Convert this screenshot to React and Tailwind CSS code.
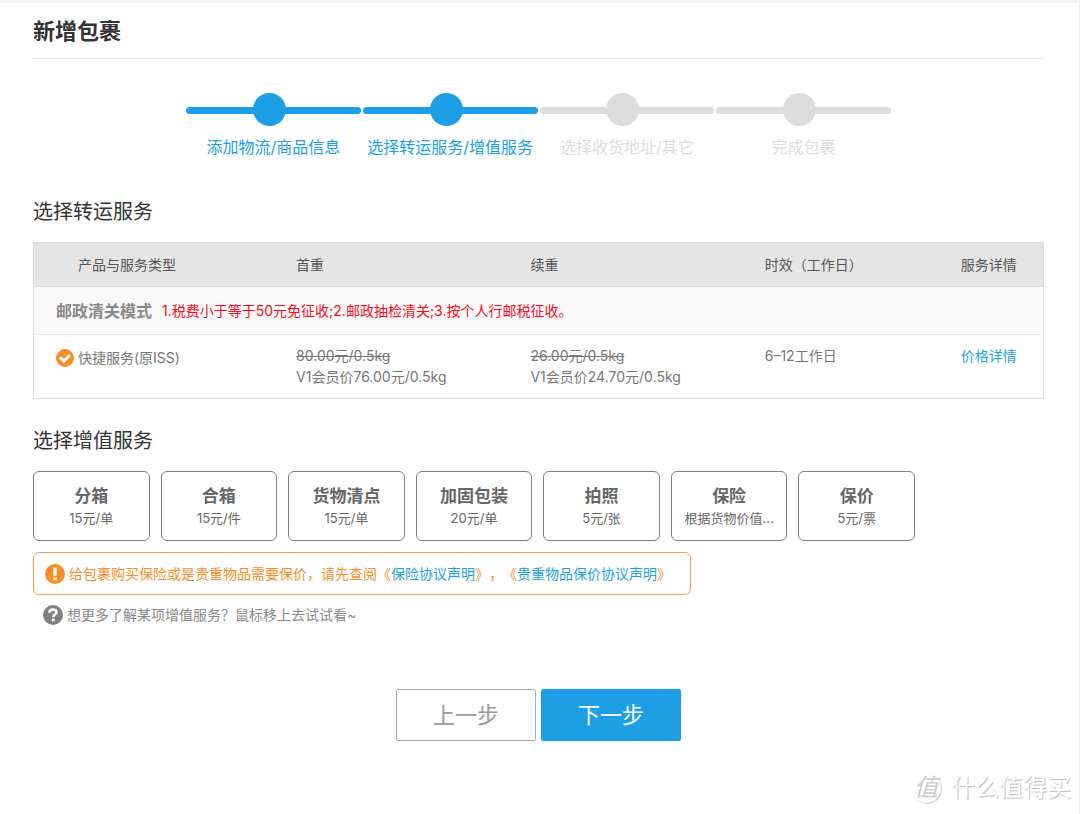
import React, { useState } from "react";

const steps = [
  { label: "添加物流/商品信息", done: true },
  { label: "选择转运服务/增值服务", done: true },
  { label: "选择收货地址/其它", done: false },
  { label: "完成包裹", done: false }
];

const shippingOptions = [
  {
    id: "iss",
    name: "快捷服务(原ISS)",
    first: { price: "80.00元/0.5kg", member: "V1会员价76.00元/0.5kg" },
    extra: { price: "26.00元/0.5kg", member: "V1会员价24.70元/0.5kg" },
    days: "6–12工作日"
  }
];

const extraServices = [
  { name: "分箱", price: "15元/单" },
  { name: "合箱", price: "15元/件" },
  { name: "货物清点", price: "15元/单" },
  { name: "加固包装", price: "20元/单" },
  { name: "拍照", price: "5元/张" },
  { name: "保险", price: "根据货物价值..." },
  { name: "保价", price: "5元/票" }
];

const Steps = () => (
  <ol className="mx-auto mt-[34px] flex max-w-[705px] gap-0.5">
    {steps.map((step) => (
      <li key={step.label} className="flex-1">
        <div className="grid items-center">
          <div className={`col-start-1 row-start-1 mt-0.5 h-[7px] rounded-sm ${step.done ? "bg-[#1c9fe5]" : "bg-[#dcdcdc]"}`} />
          <div className={`col-start-1 row-start-1 mr-2 size-[33px] justify-self-center rounded-full ${step.done ? "bg-[#1c9fe5]" : "bg-[#dcdcdc]"}`} />
        </div>
        <p className={`mt-[9px] text-center text-base leading-6 whitespace-nowrap ${step.done ? "text-[#1c9fe5]" : "text-[#dcdcdc]"}`}>
          {step.label}
        </p>
      </li>
    ))}
  </ol>
);

const Price = ({ price, member }) => (
  <td className="py-2.5 align-top leading-[21px]">
    <del className="block">{price}</del>
    <span>{member}</span>
  </td>
);

const ShippingTable = () => {
  const [selected, setSelected] = useState("iss");

  return (
    <table className="mt-4 w-full table-fixed border border-[#dcdcdc] text-left text-sm text-[#777]">
      <colgroup>
        <col className="w-[26%]" />
        <col className="w-[23.2%]" />
        <col className="w-[23.2%]" />
        <col className="w-[19.4%]" />
        <col />
      </colgroup>
      <thead className="bg-[#e5e5e5] text-[#555]">
        <tr className="h-11 border-b border-[#dadada]">
          <th className="pl-11 font-normal">产品与服务类型</th>
          <th className="font-normal">首重</th>
          <th className="font-normal">续重</th>
          <th className="font-normal">时效（工作日）</th>
          <th className="font-normal">服务详情</th>
        </tr>
      </thead>
      <tbody>
        <tr className="h-12 border-b border-[#ebebeb] bg-[#f9f9f9]">
          <td colSpan={5} className="pl-[22px]">
            <div className="flex items-center gap-2.5">
              <strong className="text-base text-[#888]">邮政清关模式</strong>
              <span className="text-[#ff0b1c]">1.税费小于等于50元免征收;2.邮政抽检清关;3.按个人行邮税征收。</span>
            </div>
          </td>
        </tr>
        {shippingOptions.map((row) => (
          <tr key={row.id} className="h-16">
            <td className="pt-[13px] pl-[22px] align-top">
              <label className="flex items-center gap-1 leading-5">
                <span className="grid size-[18px] place-items-center">
                  <input
                    type="radio"
                    name="shipping"
                    checked={selected === row.id}
                    onChange={() => setSelected(row.id)}
                    className="col-start-1 row-start-1 size-[18px] appearance-none rounded-full border border-gray-400 checked:border-[#fc8d26] checked:bg-[#fc8d26]"
                  />
                  <svg viewBox="0 0 18 18" className="pointer-events-none col-start-1 row-start-1 size-[18px]" fill="none" stroke="#fff" strokeWidth="3">
                    <path d="M4 8.4 L7.8 12.1 L14 6" />
                  </svg>
                </span>
                {row.name}
              </label>
            </td>
            <Price {...row.first} />
            <Price {...row.extra} />
            <td className="pt-2.5 align-top leading-[21px]">{row.days}</td>
            <td className="pt-2.5 align-top leading-[21px]">
              <a href="#price" className="text-[#1c9fe5]">价格详情</a>
            </td>
          </tr>
        ))}
      </tbody>
    </table>
  );
};

const ExtraServices = () => (
  <div className="mt-4 grid max-w-[882px] grid-cols-7 gap-[11px]">
    {extraServices.map((item) => (
      <button key={item.name} type="button" className="h-[70px] rounded-md border border-[#808080] text-[#666]">
        <span className="block text-[17px] leading-6 font-bold">{item.name}</span>
        <span className="block text-[13px] leading-5">{item.price}</span>
      </button>
    ))}
  </div>
);

const Watermark = () => (
  <div className="flex items-center justify-end gap-2.5 pr-2 pb-2.5 text-white" aria-hidden="true">
    <span className="flex size-[30px] items-center justify-center rounded-full text-2xl leading-none text-[#ccc] italic shadow-[1px_1px_1px_#ccc]">
      值
    </span>
    <span className="text-2xl leading-8 [text-shadow:1px_1px_1px_#b8b8b8]">什么值得买</span>
  </div>
);

const App = () => {
  return (
    <div className="flex min-h-screen flex-col border-t-3 border-r border-t-[#f4f4f4] border-r-[#eee] bg-white font-['Inter','Noto_Sans_CJK_SC',sans-serif] [text-spacing-trim:space-all]">
      <main className="flex-1 pr-[35px] pl-[33px]">
        <h1 className="border-b border-[#e5e5e5] pt-3 pb-[11px] text-[22px] leading-8 font-bold text-[#333]">新增包裹</h1>
        <Steps />

        <h2 className="mt-[39px] text-xl leading-7 text-[#333]">选择转运服务</h2>
        <ShippingTable />

        <h2 className="mt-7 text-xl leading-7 text-[#333]">选择增值服务</h2>
        <ExtraServices />

        <div className="mt-[11px] flex h-[43px] max-w-[658px] items-center gap-1 rounded-md border border-[#fd9d45] pl-[11px] text-sm text-[#fc8d26]">
          <svg viewBox="0 0 20 20" className="size-5 shrink-0">
            <circle cx="10" cy="10" r="10" fill="#fc8d26" />
            <path d="M8.3 3.5h3.4v8.2H8.3zM8.3 13.3h3.4v3H8.3z" fill="#fff" />
          </svg>
          <p>
            给包裹购买保险或是贵重物品需要保价，请先查阅《<a href="#insurance" className="text-[#1c9fe5]">保险协议声明</a>》，《<a href="#valuables" className="text-[#1c9fe5]">贵重物品保价协议声明</a>》
          </p>
        </div>

        <div className="mt-2.5 flex items-center gap-1 pl-2.5 text-sm leading-5 text-[#888]">
          <svg viewBox="0 0 20 20" className="size-5 shrink-0">
            <circle cx="10" cy="10" r="10" fill="#808080" />
            <path d="M6.4 7.8C6.5 5.6 8 4.7 10 4.7c2 0 3.4 1 3.4 2.6 0 2.2-3.1 2.2-3.1 4.6" fill="none" stroke="#fff" strokeWidth="2.7" />
            <path d="M8.9 13.5h2.8v2.7H8.9z" fill="#fff" />
          </svg>
          <p>想更多了解某项增值服务？鼠标移上去试试看~</p>
        </div>

        <div className="mt-16 flex justify-center gap-[5px] text-[22px]">
          <button type="button" className="h-[52px] w-[140px] rounded-xs border border-[#aaa] text-[#999]">上一步</button>
          <button type="button" className="h-[52px] w-[140px] rounded-xs bg-[#1c9fe5] text-white">下一步</button>
        </div>
      </main>
      <Watermark />
    </div>
  );
};

export default App;
